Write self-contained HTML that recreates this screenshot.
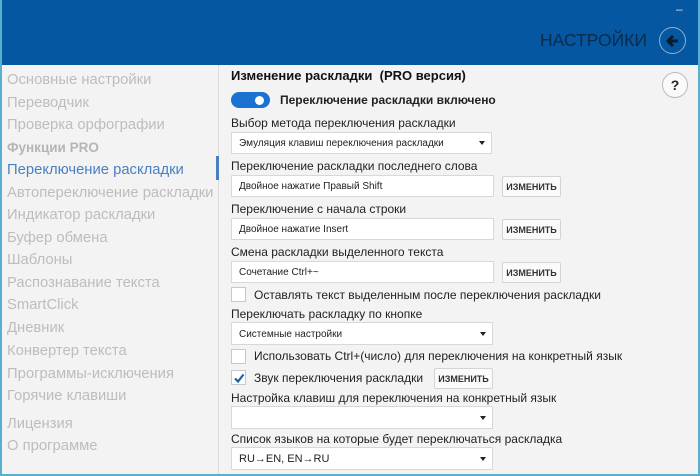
<!DOCTYPE html><html><head><meta charset="utf-8"><style>
*{margin:0;padding:0;box-sizing:border-box}
body{width:700px;height:476px;overflow:hidden;background:#f3f3f3;font-family:"Liberation Sans","DejaVu Sans",sans-serif;position:relative}
.frame{position:absolute;left:0;top:0;width:700px;height:476px;border:2px solid #5aaed0;border-top:none}
.hdr{position:absolute;left:0;top:0;width:700px;height:65px;background:#0457a0}
.t{position:absolute;white-space:nowrap}
.side{font-size:14.8px;color:#bdbdbd;left:7px}
.lbl{font-size:12px;color:#222;left:231px}
.box{position:absolute;background:#fff;border:1px solid #d8d8d8;font-size:10px;color:#222;padding-left:7px;padding-top:1px;display:flex;align-items:center}
.btn{position:absolute;background:#fafafa;border:1px solid #d4d4d4;font-size:9px;font-weight:bold;color:#333;display:flex;align-items:center;justify-content:center;border-radius:2px}
.cb{position:absolute;width:15px;height:15px;background:#fff;border:1px solid #c8c8c8}
.arr{position:absolute;right:6px;top:50%;margin-top:-2px;border-left:3.5px solid transparent;border-right:3.5px solid transparent;border-top:4px solid #222}
</style></head><body>
<div class="hdr"></div>
<div class="t" style="left:676px;top:2px;color:#cfe0f0;font-size:12px">–</div>
<div class="t" style="left:540px;top:30px;font-size:17.5px;color:#0b2b4d">НАСТРОЙКИ</div>
<div style="position:absolute;left:659px;top:27px;width:27px;height:27px;border-radius:50%;border:1.5px solid #8fb0d0;background:#0457a0"></div>
<svg style="position:absolute;left:663px;top:31px" width="20" height="20" viewBox="0 0 20 20"><path d="M15 10H6M10 5L5 10L10 15" stroke="#0b1a2b" stroke-width="3" fill="none"/></svg>
<div style="position:absolute;left:218px;top:65px;width:1px;height:411px;background:#dcdcdc"></div>
<div style="position:absolute;left:216px;top:156px;width:3px;height:24px;background:#4a7fc0"></div>
<div class="t side" style="top:72px">Основные настройки</div>
<div class="t side" style="top:95px">Переводчик</div>
<div class="t side" style="top:117px">Проверка орфографии</div>
<div class="t side" style="top:140px;font-weight:bold;font-size:13.5px;color:#b5b5b5">Функции PRO</div>
<div class="t side" style="top:162px;color:#4a7fc0">Переключение раскладки</div>
<div class="t side" style="top:185px">Автопереключение раскладки</div>
<div class="t side" style="top:207px">Индикатор раскладки</div>
<div class="t side" style="top:230px">Буфер обмена</div>
<div class="t side" style="top:252px">Шаблоны</div>
<div class="t side" style="top:275px">Распознавание текста</div>
<div class="t side" style="top:297px">SmartClick</div>
<div class="t side" style="top:320px">Дневник</div>
<div class="t side" style="top:343px">Конвертер текста</div>
<div class="t side" style="top:366px">Программы-исключения</div>
<div class="t side" style="top:388px">Горячие клавиши</div>
<div class="t side" style="top:416px">Лицензия</div>
<div class="t side" style="top:438px">О программе</div>

<div class="t" style="left:231px;top:68px;font-size:13px;font-weight:bold;color:#111">Изменение раскладки &nbsp;(PRO версия)</div>
<div style="position:absolute;left:662px;top:72px;width:26px;height:26px;border-radius:50%;border:1px solid #bbb;background:#fafafa;font-size:14px;font-weight:bold;text-align:center;line-height:24px;color:#222">?</div>
<div style="position:absolute;left:231px;top:92px;width:39px;height:16px;border-radius:8px;background:#1a73d0"></div>
<div style="position:absolute;left:255px;top:96px;width:9px;height:9px;border-radius:50%;background:#fff"></div>
<div class="t" style="left:280px;top:93px;font-size:12px;font-weight:bold;color:#222">Переключение раскладки включено</div>

<div class="t lbl" style="top:116px">Выбор метода переключения раскладки</div>
<div class="box" style="left:231px;top:132px;width:261px;height:22px">Эмуляция клавиш переключения раскладки<span class="arr"></span></div>
<div class="t lbl" style="top:159px">Переключение раскладки последнего слова</div>
<div class="box" style="left:231px;top:175px;width:263px;height:22px">Двойное нажатие Правый Shift</div>
<div class="btn" style="left:502px;top:176px;width:59px;height:21px">ИЗМЕНИТЬ</div>
<div class="t lbl" style="top:202px">Переключение с начала строки</div>
<div class="box" style="left:231px;top:218px;width:263px;height:22px">Двойное нажатие Insert</div>
<div class="btn" style="left:502px;top:219px;width:59px;height:21px">ИЗМЕНИТЬ</div>
<div class="t lbl" style="top:245px">Смена раскладки выделенного текста</div>
<div class="box" style="left:231px;top:261px;width:263px;height:22px">Сочетание Ctrl+~</div>
<div class="btn" style="left:502px;top:262px;width:59px;height:21px">ИЗМЕНИТЬ</div>
<div class="cb" style="left:231px;top:287px"></div>
<div class="t lbl" style="left:254px;top:288px">Оставлять текст выделенным после переключения раскладки</div>
<div class="t lbl" style="top:307px">Переключать раскладку по кнопке</div>
<div class="box" style="left:231px;top:322px;width:262px;height:23px">Системные настройки<span class="arr"></span></div>
<div class="cb" style="left:231px;top:349px"></div>
<div class="t lbl" style="left:254px;top:349px">Использовать Ctrl+(число) для переключения на конкретный язык</div>
<div class="cb" style="left:231px;top:370px"></div>
<svg style="position:absolute;left:232px;top:371px" width="14" height="14"><path d="M3 7.5L6 10.5L11.5 3.5" stroke="#1a5fb0" stroke-width="2.2" fill="none"/></svg>
<div class="t lbl" style="left:254px;top:371px">Звук переключения раскладки</div>
<div class="btn" style="left:434px;top:368px;width:59px;height:21px">ИЗМЕНИТЬ</div>
<div class="t lbl" style="top:391px">Настройка клавиш для переключения на конкретный язык</div>
<div class="box" style="left:231px;top:406px;width:262px;height:23px"><span class="arr"></span></div>
<div class="t lbl" style="top:432px">Список языков на которые будет переключаться раскладка</div>
<div class="box" style="left:231px;top:447px;width:262px;height:23px;font-size:11px">RU→EN, EN→RU<span class="arr"></span></div>
<div class="frame"></div>
</body></html>
